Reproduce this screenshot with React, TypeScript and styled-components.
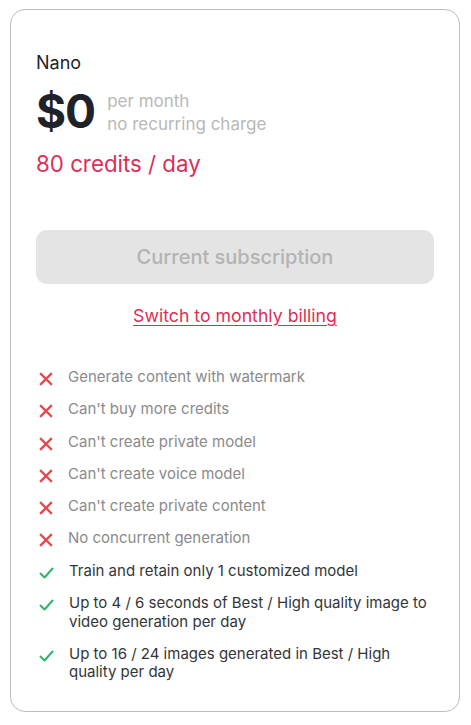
import { FC } from 'react';
import styled, { createGlobalStyle } from 'styled-components';

const GlobalStyle = createGlobalStyle`
  html, body {
    margin: 0;
    padding: 0;
    background: #fff;
    font-family: Inter, "Noto Sans", sans-serif;
  }
`;

const Page = styled.div`
  padding: 9px 11px 14px 10px;
`;

const Card = styled.div`
  border: 1px solid #bdbdbd;
  border-radius: 15px;
  padding: 40px 25px 29px 25px;
  display: flex;
  flex-direction: column;
`;

const PlanName = styled.div`
  font-size: 18px;
  line-height: 26px;
  color: #1f2329;
`;

const PriceRow = styled.div`
  display: flex;
  align-items: center;
  gap: 12px;
  margin-top: 10px;
`;

const Price = styled.div`
  font-size: 46px;
  font-weight: 700;
  line-height: 50px;
  color: #1f2329;
  letter-spacing: -1px;
`;

const PriceNote = styled.div`
  display: flex;
  flex-direction: column;
  font-size: 17px;
  line-height: 23px;
  padding-top: 3px;
  color: #b8b8b8;
`;

const Credits = styled.div`
  font-size: 22.3px;
  line-height: 30px;
  color: #dc2f57;
  margin-top: 13px;
`;

const Button = styled.button`
  margin-top: 51px;
  height: 54px;
  border: 0;
  border-radius: 11px;
  background: #e4e4e4;
  color: #b3b3b3;
  font-family: inherit;
  font-size: 20px;
  font-weight: 500;
`;

const Link = styled.a`
  align-self: center;
  margin-top: 20px;
  font-size: 17.7px;
  line-height: 24px;
  color: #dc2f57;
  text-decoration: underline;
  text-underline-offset: 3px;
`;

const List = styled.ul`
  list-style: none;
  margin: 40px 0 0 0;
  padding: 0;
  display: flex;
  flex-direction: column;
  gap: 13.8px;
`;

const Item = styled.li<{ ok?: boolean }>`
  display: flex;
  align-items: flex-start;
  gap: 15px;
  padding-left: 3px;
  font-size: 15px;
  line-height: 18.5px;
  color: ${(props) => (props.ok ? '#333639' : '#8a8a8a')};
  svg {
    flex: none;
    margin-top: 4px;
  }
`;

const Cross: FC = () => (
  <svg width="14" height="14" viewBox="0 0 14 14">
    <path d="M2 2 L12 12 M12 2 L2 12" stroke="#e5484d" strokeWidth="2.4" strokeLinecap="square" fill="none" />
  </svg>
);

const Check: FC = () => (
  <svg width="15" height="14" viewBox="0 0 15 14">
    <path d="M1.5 7.5 L5.5 11.5 L13.5 2.5" stroke="#2eb56b" strokeWidth="2" strokeLinecap="round" strokeLinejoin="round" fill="none" />
  </svg>
);

const limits = [
  'Generate content with watermark',
  "Can't buy more credits",
  "Can't create private model",
  "Can't create voice model",
  "Can't create private content",
  'No concurrent generation',
];

const perks = [
  'Train and retain only 1 customized model',
  'Up to 4 / 6 seconds of Best / High quality image to video generation per day',
  'Up to 16 / 24 images generated in Best / High quality per day',
];

export default function App() {
  return (
    <Page>
      <GlobalStyle />
      <Card>
        <PlanName>Nano</PlanName>
        <PriceRow>
          <Price>$0</Price>
          <PriceNote>
            <span>per month</span>
            <span>no recurring charge</span>
          </PriceNote>
        </PriceRow>
        <Credits>80 credits / day</Credits>
        <Button disabled>Current subscription</Button>
        <Link href="#">Switch to monthly billing</Link>
        <List>
          {limits.map((text) => (
            <Item key={text}>
              <Cross />
              <span>{text}</span>
            </Item>
          ))}
          {perks.map((text) => (
            <Item key={text} ok>
              <Check />
              <span>{text}</span>
            </Item>
          ))}
        </List>
      </Card>
    </Page>
  );
}
